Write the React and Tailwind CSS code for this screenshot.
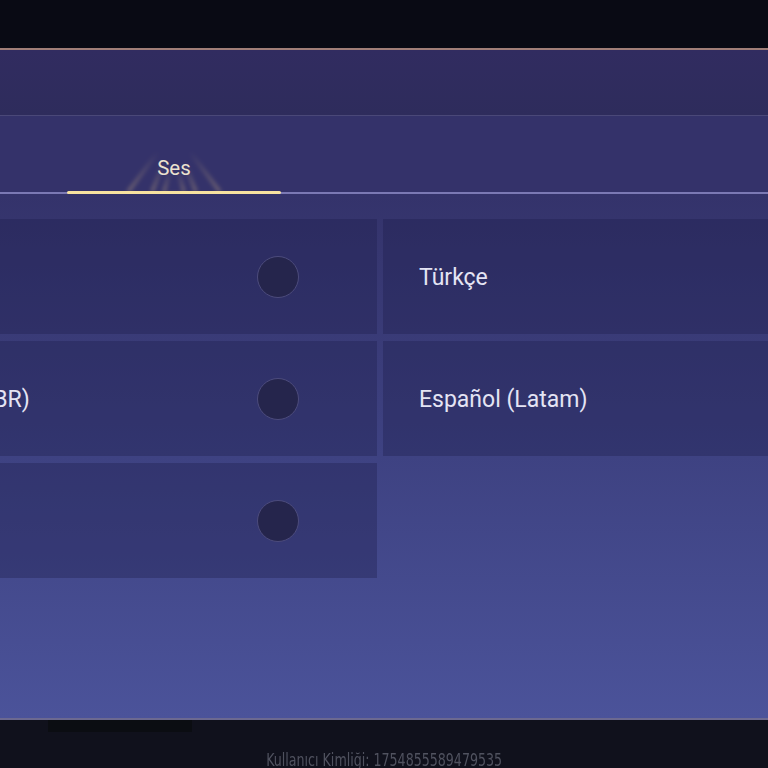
import React from 'react';

const ROWS = [
  ['English', 'Türkçe'],
  ['Português (BR)', 'Español (Latam)'],
  ['Русский', null],
];

function Radio() {
  return <div className="w-[42px] h-[42px] rounded-full bg-[#25254c] border-[1.5px] border-[#4c4b7c] shrink-0" />;
}

function LangCell({ label }) {
  return (
    <div className="h-[115px] bg-[#1e1c4a]/35 flex items-center justify-between pl-[36px] pr-[78px]">
      <span className="text-[23px] text-[#e4e4f4] whitespace-nowrap pt-[3px]">{label}</span>
      <Radio />
    </div>
  );
}

// soft golden fan of light behind the active tab label
function TabGlow() {
  return (
    <svg className="absolute left-[47px] bottom-0" width="120" height="46" viewBox="0 0 120 46">
      <defs>
        <radialGradient id="g" cx="50%" cy="100%" r="55%">
          <stop offset="0%" stopColor="#f3c46a" stopOpacity="0.55" />
          <stop offset="55%" stopColor="#e0a850" stopOpacity="0.16" />
          <stop offset="100%" stopColor="#e0a850" stopOpacity="0" />
        </radialGradient>
        <linearGradient id="fade" x1="0" y1="1" x2="0" y2="0">
          <stop offset="0%" stopColor="#f5cf80" stopOpacity="0.45" />
          <stop offset="100%" stopColor="#f5cf80" stopOpacity="0" />
        </linearGradient>
        <filter id="b" x="-20%" y="-20%" width="140%" height="140%">
          <feGaussianBlur stdDeviation="2" />
        </filter>
      </defs>
      <ellipse cx="60" cy="46" rx="56" ry="36" fill="url(#g)" />
      <g stroke="url(#fade)" strokeWidth="2.5" fill="none" filter="url(#b)">
        <path d="M14 46 L44 6" />
        <path d="M106 46 L76 6" />
        <path d="M38 46 L50 16" />
        <path d="M82 46 L70 16" />
        <path d="M50 46 L56 24" />
        <path d="M70 46 L64 24" />
      </g>
    </svg>
  );
}

export default function App() {
  return (
    <div className="w-[768px] h-[768px] overflow-hidden bg-[#0a0b14] flex flex-col" style={{ fontFamily: 'Roboto, "Noto Sans", sans-serif' }}>
      <div className="h-[48px] bg-[#090a14] shrink-0" />
      <div className="h-[2px] bg-[#a07e78] shrink-0" />
      <div className="h-[65px] bg-gradient-to-b from-[#312c60] to-[#2e2c5c] shrink-0" />
      <div className="h-[1px] bg-[#4a4878] shrink-0" />

      {/* tabs */}
      <div className="h-[76px] bg-[#34326a] shrink-0 flex items-end relative">
        <div className="ml-[67px] w-[214px] h-full relative flex items-center justify-center">
          <TabGlow />
          <span className="relative mt-[28px] text-[20.5px] text-[#ece2cf]">Ses</span>
          <div className="absolute left-0 right-0 bottom-[-2px] h-[3px] bg-[#f7e2a0] rounded-full z-10" />
        </div>
      </div>
      <div className="h-[2px] bg-[#7b79b4] shrink-0" />

      {/* content */}
      <div className="flex-1 bg-gradient-to-b from-[#34336b] via-[#3e4282] to-[#4b539a] pt-[25px]">
        <div className="ml-[-162px] grid grid-cols-[539px_528px] gap-x-[6px] gap-y-[7px]">
          {ROWS.map(([a, b], i) => (
            <React.Fragment key={i}>
              <LangCell label={a} />
              {b ? (
                <div className="h-[115px] bg-[#1e1c4a]/35 flex items-center pl-[36px]">
                  <span className="text-[23px] text-[#e4e4f4] whitespace-nowrap pt-[3px]">{b}</span>
                </div>
              ) : (
                <div />
              )}
            </React.Fragment>
          ))}
        </div>
      </div>

      <div className="h-[2px] bg-[#6c6990] shrink-0" />
      <div className="h-[48px] bg-[#10111c] shrink-0 relative flex justify-center">
        <div className="absolute left-[48px] top-0 w-[144px] h-[12px] bg-[#0b0d12]" />
        <span
          className="mt-[31px] text-[18px] text-[#50525f] whitespace-nowrap leading-none scale-x-[0.78]"
          style={{ fontFamily: '"Liberation Sans Narrow", "DejaVu Sans Condensed", sans-serif' }}
        >
          Kullanıcı Kimliği: 1754855589479535
        </span>
      </div>
    </div>
  );
}
